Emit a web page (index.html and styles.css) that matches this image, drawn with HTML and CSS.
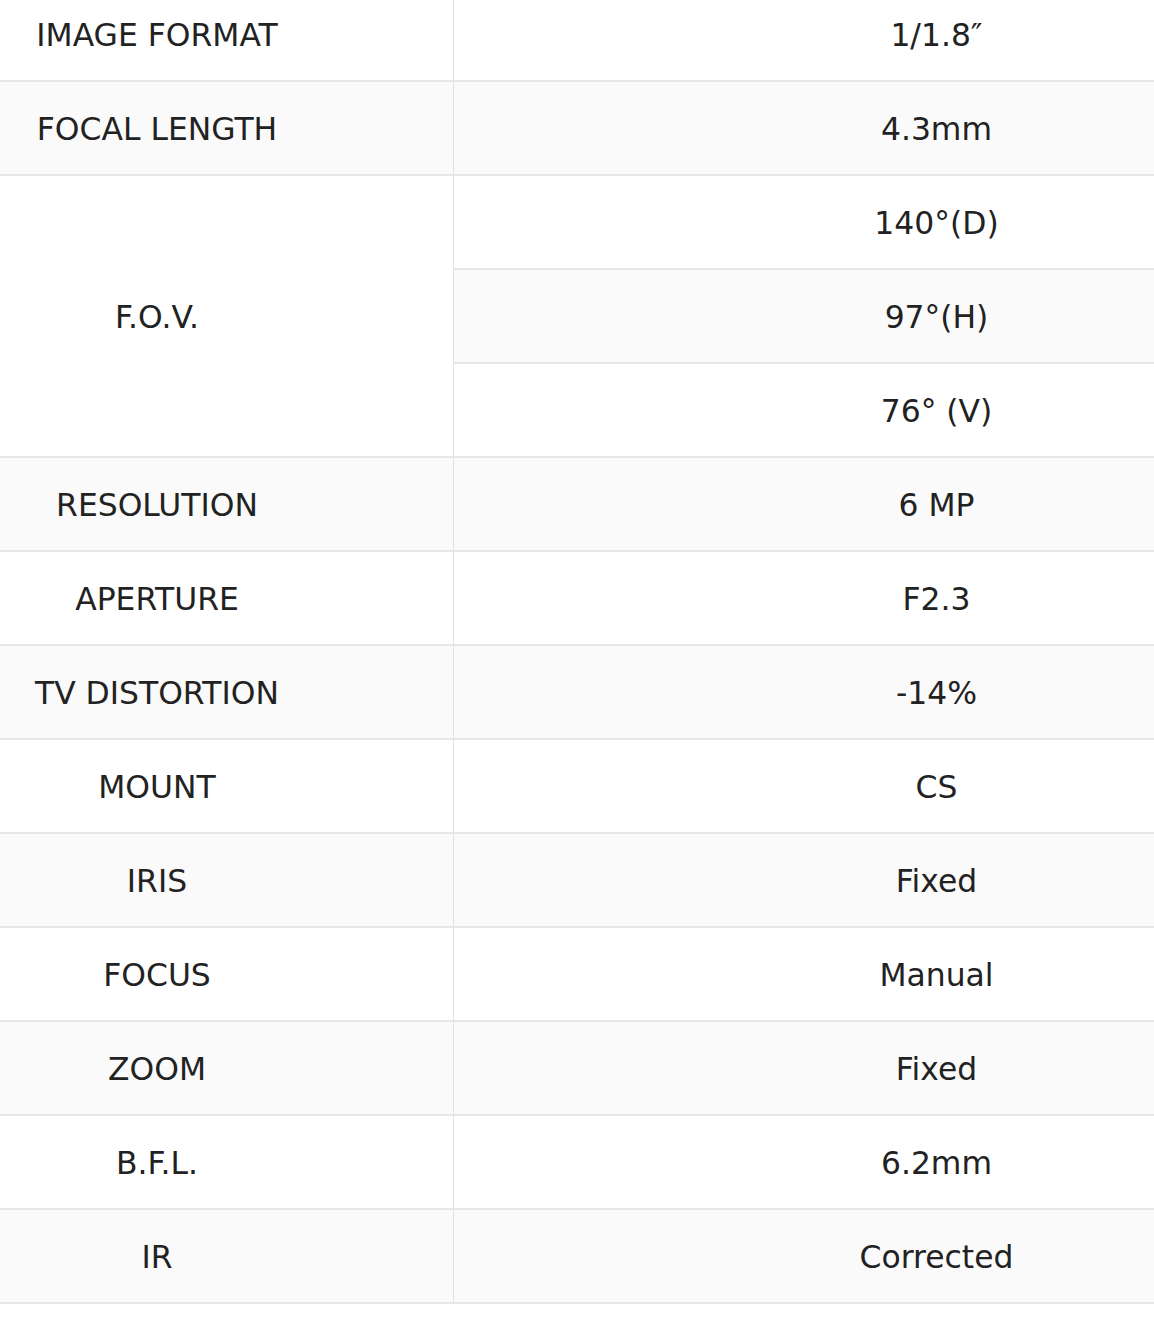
FILE: index.html
```html
<!DOCTYPE html>
<html>
<head>
<meta charset="utf-8">
<link rel="stylesheet" href="styles.css">
</head>
<body>
<table class="spec">
  <tbody>
    <tr><td class="k">IMAGE FORMAT</td><td class="v">1/1.8″</td></tr>
    <tr><td class="k">FOCAL LENGTH</td><td class="v">4.3mm</td></tr>
    <tr><td class="k" rowspan="3">F.O.V.</td><td class="v">140°(D)</td></tr>
    <tr><td class="v">97°(H)</td></tr>
    <tr><td class="v">76° (V)</td></tr>
    <tr><td class="k">RESOLUTION</td><td class="v">6 MP</td></tr>
    <tr><td class="k">APERTURE</td><td class="v">F2.3</td></tr>
    <tr><td class="k">TV DISTORTION</td><td class="v">-14%</td></tr>
    <tr><td class="k">MOUNT</td><td class="v">CS</td></tr>
    <tr><td class="k">IRIS</td><td class="v">Fixed</td></tr>
    <tr><td class="k">FOCUS</td><td class="v">Manual</td></tr>
    <tr><td class="k">ZOOM</td><td class="v">Fixed</td></tr>
    <tr><td class="k">B.F.L.</td><td class="v">6.2mm</td></tr>
    <tr><td class="k">IR</td><td class="v">Corrected</td></tr>
  </tbody>
</table>
</body>
</html>
```
FILE: styles.css
```css
html, body {
  margin: 0;
  padding: 0;
  background: #ffffff;
  overflow: hidden;
}
.spec {
  width: 1154px;
  margin-top: -12px;
  border-collapse: collapse;
  font-family: "DejaVu Sans", Verdana, sans-serif;
  font-size: 31.4px;
  color: #222222;
}
.spec tr:nth-child(even) td {
  background: #fafafa;
}
.spec tr:nth-child(even) td.k[rowspan] {
  background: #ffffff;
}
.spec td {
  height: 90px;
  padding: 2px 0 0 0;
  text-align: center;
  vertical-align: middle;
  border-bottom: 2px solid #e6e6e6;
}
.spec td.k {
  width: 314px;
  padding-right: 139px;
}
.spec td.v {
  padding-left: 265px;
  border-left: 1px solid #e2e2e2;
}
```
